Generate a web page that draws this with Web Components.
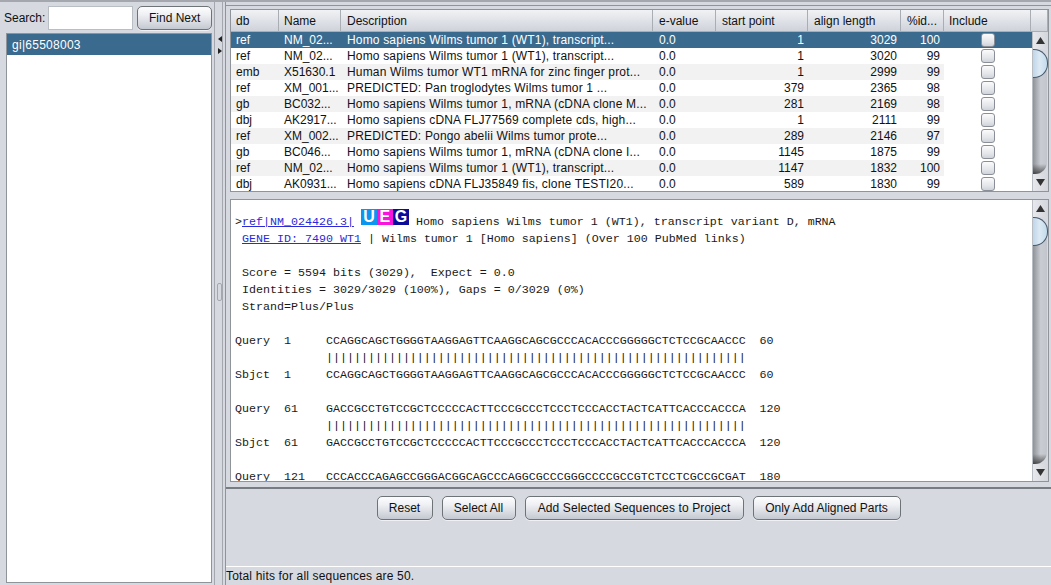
<!DOCTYPE html>
<html>
<head>
<meta charset="utf-8">
<title>Blast hits</title>
<style>
    html, body { margin: 0; height: 100%; overflow: hidden; }
    body { font: 12px "Liberation Sans", Arial, sans-serif; color: #111; background: #d6d9df; }
</style>
</head>
<body>
<blast-app></blast-app>

<script>
const rowsData = [
    ['ref', 'NM_02...', 'Homo sapiens Wilms tumor 1 (WT1), transcript...', '0.0', 1, 3029, 100],
    ['ref', 'NM_02...', 'Homo sapiens Wilms tumor 1 (WT1), transcript...', '0.0', 1, 3020, 99],
    ['emb', 'X51630.1', 'Human Wilms tumor WT1 mRNA for zinc finger prot...', '0.0', 1, 2999, 99],
    ['ref', 'XM_001...', 'PREDICTED: Pan troglodytes Wilms tumor 1 ...', '0.0', 379, 2365, 98],
    ['gb', 'BC032...', 'Homo sapiens Wilms tumor 1, mRNA (cDNA clone M...', '0.0', 281, 2169, 98],
    ['dbj', 'AK2917...', 'Homo sapiens cDNA FLJ77569 complete cds, high...', '0.0', 1, 2111, 99],
    ['ref', 'XM_002...', 'PREDICTED: Pongo abelii Wilms tumor prote...', '0.0', 289, 2146, 97],
    ['gb', 'BC046...', 'Homo sapiens Wilms tumor 1, mRNA (cDNA clone I...', '0.0', 1145, 1875, 99],
    ['ref', 'NM_02...', 'Homo sapiens Wilms tumor 1 (WT1), transcript...', '0.0', 1147, 1832, 100],
    ['dbj', 'AK0931...', 'Homo sapiens cDNA FLJ35849 fis, clone TESTI20...', '0.0', 589, 1830, 99],
]

class UiButton extends HTMLElement {
    constructor() {
        super()
        this.attachShadow({ mode: 'open' })
        this.shadowRoot.innerHTML = `
            <style>
                :host {
                    display: inline-flex;
                    align-items: center;
                    justify-content: center;
                    box-sizing: border-box;
                    height: 24px;
                    padding: 0;
                    border: 1px solid #6e7378;
                    border-radius: 5px;
                    background: linear-gradient(#fdfdfe, #eef0f3 35%, #d5d8df 75%, #c4c8d0);
                    box-shadow: 0 1px 0 #eef0f3;
                    color: #111;
                    font: 12px "Liberation Sans", Arial, sans-serif;
                    white-space: nowrap;
                }
            </style>
            <slot></slot>
        `
    }
}

class UiScrollbar extends HTMLElement {
    constructor() {
        super()
        this.attachShadow({ mode: 'open' })
        this.shadowRoot.innerHTML = `
            <style>
                :host {
                    display: flex;
                    flex-direction: column;
                    flex: none;
                    width: 16px;
                    background: #d6d9df;
                    border-left: 1px solid #b9bdc4;
                    box-sizing: border-box;
                    position: relative;
                    overflow: hidden;
                }
                .arrow {
                    height: 17px;
                    flex: none;
                    display: flex;
                    align-items: center;
                    justify-content: center;
                    background: linear-gradient(90deg, #e6e8ec, #d3d6dc);
                }
                .track { flex: 1; background: #d6d9df; position: relative; }
                .thumb {
                    position: absolute;
                    left: -1px;
                    top: 0;
                    width: 16px;
                    height: 29px;
                    box-sizing: border-box;
                    border: 1px solid #47586a;
                    border-left: 0;
                    border-radius: 0 14px 14px 0;
                    background: linear-gradient(90deg, #b9d3e8, #dce9f3 50%, #c3dbee);
                }
                .rest {
                    position: absolute;
                    left: 0;
                    right: 1px;
                    top: 14px;
                    bottom: 0;
                    background:
                        linear-gradient(transparent calc(100% - 10px), rgba(40, 40, 40, .75)),
                        linear-gradient(90deg, #8f9297, #c9ccd2 55%, #c2c5cb);
                    border-radius: 0 0 12px 0;
                }
            </style>
            <div class="arrow"><svg width="9" height="7"><path d="M4.5 0 L9 7 L0 7 Z" fill="#333"/></svg></div>
            <div class="track"><div class="rest"></div><div class="thumb"></div></div>
            <div class="arrow"><svg width="9" height="7"><path d="M0 0 L9 0 L4.5 7 Z" fill="#333"/></svg></div>
        `
    }
}

class HitTable extends HTMLElement {
    constructor() {
        super()
        this.attachShadow({ mode: 'open' })
        const heads = ['db', 'Name', 'Description', 'e-value', 'start point', 'align length', '%id...', 'Include']
        const rows = rowsData.map((r, i) => `
            <div class="row ${i === 0 ? 'sel' : ''} ${i % 2 ? '' : 'odd'}">
                <span>${r[0]}</span><span>${r[1]}</span><span class="desc">${r[2]}</span><span class="ev">${r[3]}</span>
                <span class="num">${r[4]}</span><span class="num">${r[5]}</span><span class="num">${r[6]}</span>
                <span class="inc"><i></i></span>
            </div>`).join('')
        this.shadowRoot.innerHTML = `
            <style>
                :host {
                    display: flex;
                    flex-direction: column;
                    box-sizing: border-box;
                    height: 183px;
                    border: 1px solid #8f949b;
                    background: #fff;
                    overflow: hidden;
                    --cols: 48px 62px 312px 63px 92px 93px 43px 87px;
                }
                .head {
                    display: grid;
                    grid-template-columns: var(--cols) 1fr;
                    height: 22px;
                    flex: none;
                    background: linear-gradient(#f1f2f5, #dcdfe5 60%, #cfd2d9);
                    border-bottom: 1px solid #a9adb4;
                    box-sizing: border-box;
                }
                .head span {
                    border-right: 1px solid #a9adb4;
                    padding: 4px 0 0 5px;
                    white-space: nowrap;
                    overflow: hidden;
                }
                .head span:nth-child(n+3) { padding-left: 6px; }
                .head span:nth-child(n+8) { padding-left: 5px; }
                .body { display: flex; flex: 1; min-height: 0; }
                .rows { flex: 1; overflow: hidden; }
                .row {
                    display: grid;
                    grid-template-columns: var(--cols) 1fr;
                    height: 16px;
                    line-height: 17px;
                    white-space: nowrap;
                }
                .row.sel { background: #3a6a8e; }
                .row span { padding-left: 5px; overflow: hidden; background: #fff; }
                .row .desc { letter-spacing: .17px; padding-left: 6px; }
                .row .ev { padding-left: 6px; }
                .row.odd span { background: #f2f2f2; }
                .row.sel span { background: #3a6a8e; color: #fff; }
                .row span.inc { background: #fff; padding: 0; display: flex; justify-content: center; align-items: center; }
                .row.sel span.inc { background: #3a6a8e; }
                .row .num { text-align: right; padding: 0 4px 0 0; }
                .inc i {
                    display: block;
                    box-sizing: border-box;
                    width: 14px;
                    height: 14px;
                    border: 1px solid #8a8f97;
                    border-radius: 3px;
                    background: linear-gradient(#fbfbfc, #e0e3e8 70%, #cfd3da);
                }
            </style>
            <div class="head">${heads.map(h => `<span>${h}</span>`).join('')}<span></span></div>
            <div class="body">
                <div class="rows">${rows}</div>
                <ui-scrollbar></ui-scrollbar>
            </div>
        `
    }
}

class AlignmentView extends HTMLElement {
    constructor() {
        super()
        this.attachShadow({ mode: 'open' })
        const bars = '|'.repeat(60)
        const lines = [
            `&gt;<a>ref|NM_024426.3|</a> <span class="logo"><b class="u">U</b><b class="e">E</b><b class="g">G</b></span> Homo sapiens Wilms tumor 1 (WT1), transcript variant D, mRNA`,
            ` <a>GENE ID: 7490 WT1</a> | Wilms tumor 1 [Homo sapiens] (Over 100 PubMed links)`,
            ``,
            ` Score = 5594 bits (3029),  Expect = 0.0`,
            ` Identities = 3029/3029 (100%), Gaps = 0/3029 (0%)`,
            ` Strand=Plus/Plus`,
            ``,
            `Query  1     CCAGGCAGCTGGGGTAAGGAGTTCAAGGCAGCGCCCACACCCGGGGGCTCTCCGCAACCC  60`,
            `             ${bars}`,
            `Sbjct  1     CCAGGCAGCTGGGGTAAGGAGTTCAAGGCAGCGCCCACACCCGGGGGCTCTCCGCAACCC  60`,
            ``,
            `Query  61    GACCGCCTGTCCGCTCCCCCACTTCCCGCCCTCCCTCCCACCTACTCATTCACCCACCCA  120`,
            `             ${bars}`,
            `Sbjct  61    GACCGCCTGTCCGCTCCCCCACTTCCCGCCCTCCCTCCCACCTACTCATTCACCCACCCA  120`,
            ``,
            `Query  121   CCCACCCAGAGCCGGGACGGCAGCCCAGGCGCCCGGGCCCCGCCGTCTCCTCGCCGCGAT  180`,
        ]
        this.shadowRoot.innerHTML = `
            <style>
                :host {
                    display: flex;
                    box-sizing: border-box;
                    height: 283px;
                    border: 1px solid #8f949b;
                    background: #fff;
                    overflow: hidden;
                }
                .text {
                    flex: 1;
                    min-width: 0;
                    padding: 14px 0 0 4px;
                    overflow: hidden;
                    font: 11.67px/17px "Liberation Mono", "Courier New", monospace;
                    color: #1a1a1a;
                }
                .text div { height: 17px; white-space: pre; }
                a { color: #2a2ad8; text-decoration: underline; }
                .logo {
                    display: inline-flex;
                    vertical-align: 3px;
                    margin: -8px 0;
                    font: bold 16px/16px "Liberation Sans", Arial, sans-serif;
                    color: #fff;
                }
                .logo b { width: 16px; height: 16px; text-align: center; }
                .u { background: #0a96f0; }
                .e { background: #f814dc; }
                .g { background: #0c0c9a; }
            </style>
            <div class="text">${lines.map(l => `<div>${l}</div>`).join('')}</div>
            <ui-scrollbar></ui-scrollbar>
        `
    }
}

class BlastApp extends HTMLElement {
    constructor() {
        super()
        this.attachShadow({ mode: 'open' })
        this.shadowRoot.innerHTML = `
            <style>
                :host {
                    display: grid;
                    grid-template-columns: 214px 12px 1fr;
                    box-sizing: border-box;
                    height: 585px;
                    border-top: 2px solid #a4a7ad;
                    background: #d6d9df;
                }
                .left { display: flex; flex-direction: column; padding: 3px 2px 3px 6px; min-width: 0; }
                .search { display: flex; align-items: center; height: 25px; margin-left: -2px; flex: none; }
                .search input {
                    width: 85px;
                    height: 24px;
                    box-sizing: border-box;
                    margin: 0 0 0 3px;
                    border: 1px solid #b9bdc4;
                    background: #fff;
                    padding: 0;
                }
                .search ui-button { width: 75px; margin-left: 4px; }
                .list {
                    flex: 1;
                    margin-top: 3px;
                    border: 1px solid #8f949b;
                    background: #fff;
                }
                .list div {
                    height: 21px;
                    line-height: 23px;
                    padding-left: 5px;
                    background: #3a6a8e;
                    color: #fff;
                    letter-spacing: .27px;
                }
                .divider {
                    border-left: 1px solid #a4a7ad;
                    border-right: 1px solid #8f949b;
                    box-shadow: inset -2px 0 0 #d6d9df, inset -3px 0 0 #a4a7ad;
                    box-sizing: border-box;
                    position: relative;
                }
                .grip {
                    position: absolute;
                    top: 281px;
                    left: 2px;
                    width: 3px;
                    height: 16px;
                    border: 1px solid #a4a7ad;
                    border-radius: 2px;
                }
                .arrows { margin: 33px 0 0 2px; line-height: 0; }
                .right { display: flex; flex-direction: column; min-width: 0; padding: 0 2px 0 4px; }
                .topline { height: 1px; margin: 3px -2px 3px -4px; background: #8f949b; flex: none; }
                .hsplit { height: 7px; flex: none; }
                .actions {
                    flex: none;
                    height: 80px;
                    margin: 5px -2px 0 -4px;
                    border-top: 2px solid #777b82;
                    border-bottom: 1px solid #fff;
                    box-sizing: border-box;
                    display: flex;
                    justify-content: center;
                    gap: 9px;
                    padding-top: 7px;
                }
                .actions ui-button:nth-child(1) { width: 56px; }
                .actions ui-button:nth-child(2) { width: 74px; }
                .actions ui-button:nth-child(3) { width: 219px; letter-spacing: .12px; }
                .actions ui-button:nth-child(4) { width: 148px; }
                .status {
                    margin-left: -4px;
                    height: 19px;
                    line-height: 19px;
                    white-space: nowrap;
                    letter-spacing: .17px;
                }
            </style>
            <div class="left">
                <div class="search">
                    <span>Search:</span>
                    <input>
                    <ui-button>Find Next</ui-button>
                </div>
                <div class="list"><div>gi|65508003</div></div>
            </div>
            <div class="divider">
                <div class="arrows">
                    <svg width="6" height="20"><path d="M5 1 L1 4 L5 7 Z M1 13 L5 16 L1 19 Z" fill="#222"/></svg>
                </div>
                <div class="grip"></div>
            </div>
            <div class="right">
                <div class="topline"></div>
                <hit-table></hit-table>
                <div class="hsplit"></div>
                <alignment-view></alignment-view>
                <div class="actions">
                    <ui-button>Reset</ui-button>
                    <ui-button>Select All</ui-button>
                    <ui-button>Add Selected Sequences to Project</ui-button>
                    <ui-button>Only Add Aligned Parts</ui-button>
                </div>
                <div class="status">Total hits for all sequences are 50.</div>
            </div>
        `
    }
}

customElements.define('ui-button', UiButton)
customElements.define('ui-scrollbar', UiScrollbar)
customElements.define('hit-table', HitTable)
customElements.define('alignment-view', AlignmentView)
customElements.define('blast-app', BlastApp)
</script>
</body>
</html>
